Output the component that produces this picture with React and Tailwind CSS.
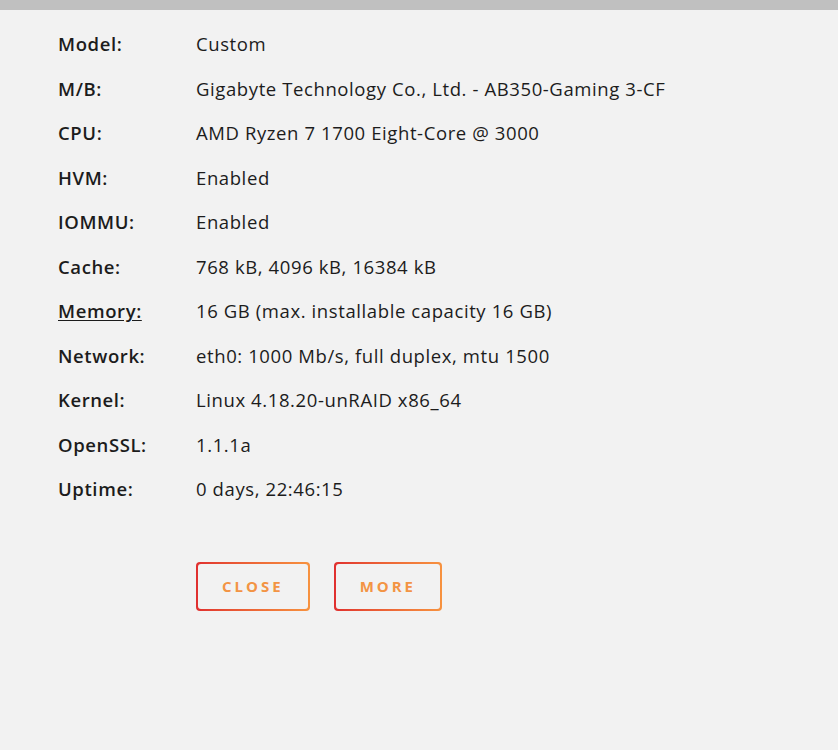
import React from 'react';

const rows = [
  ['Model:', 'Custom'],
  ['M/B:', 'Gigabyte Technology Co., Ltd. - AB350-Gaming 3-CF'],
  ['CPU:', 'AMD Ryzen 7 1700 Eight-Core @ 3000'],
  ['HVM:', 'Enabled'],
  ['IOMMU:', 'Enabled'],
  ['Cache:', '768 kB, 4096 kB, 16384 kB'],
  ['Memory:', '16 GB (max. installable capacity 16 GB)', true],
  ['Network:', 'eth0: 1000 Mb/s, full duplex, mtu 1500'],
  ['Kernel:', 'Linux 4.18.20-unRAID x86_64'],
  ['OpenSSL:', '1.1.1a'],
  ['Uptime:', '0 days, 22:46:15'],
];

const GradientButton = ({ children }) => (
  <button className="rounded-[4px] bg-gradient-to-r from-[#e02f2f] to-[#f7923f] p-[2px]">
    <span className="flex h-[45px] items-center justify-center rounded-[3px] bg-[#f2f2f2] px-[24px] text-[15px] font-bold uppercase tracking-[0.2em] text-[#f39444]">
      {children}
    </span>
  </button>
);

const App = () => {
  return (
    <div
      className="min-h-[750px] bg-[#f2f2f2] text-[#1c1c1c]"
      style={{ fontFamily: '"Open Sans", "Noto Sans", sans-serif' }}
    >
      <div className="h-[10px] bg-[#c0c0c0]"></div>

      <div className="pl-[58px] pt-[12px]">
        {rows.map(([label, value, link]) => (
          <div key={label} className="flex h-[44.5px] items-center text-[18.5px] tracking-[0.6px]">
            <span className={`w-[138px] font-semibold ${link ? 'underline underline-offset-2' : ''}`}>
              {label}
            </span>
            <span>{value}</span>
          </div>
        ))}

        <div className="ml-[138px] mt-[50px] flex gap-[24px]">
          <GradientButton>Close</GradientButton>
          <GradientButton>More</GradientButton>
        </div>
      </div>
    </div>
  );
};

export default App;
